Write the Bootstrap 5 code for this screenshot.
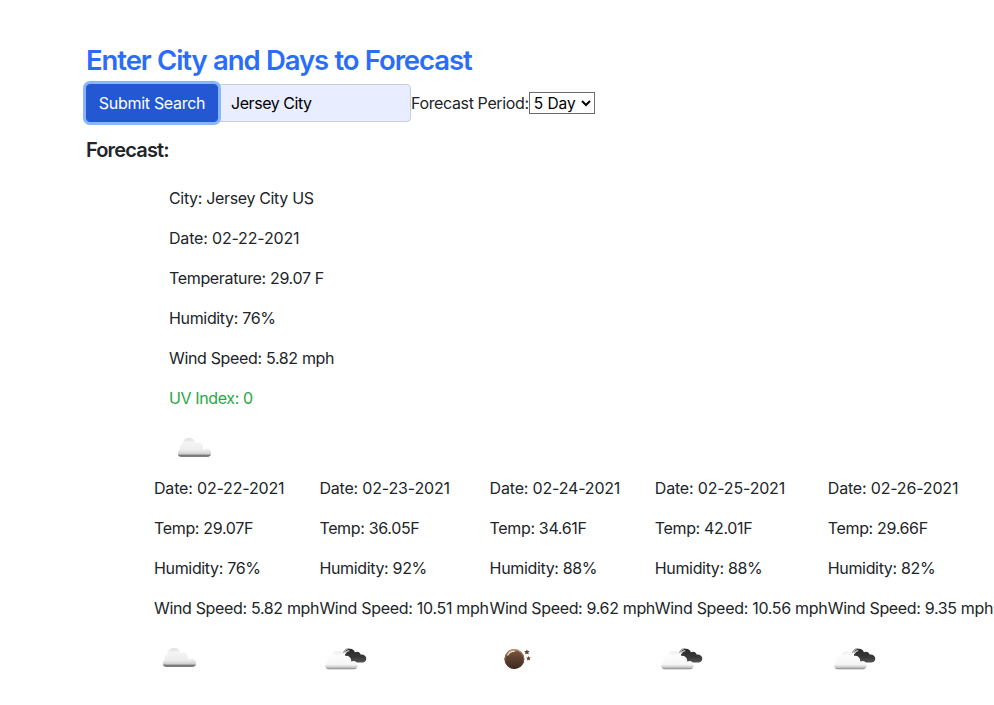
<!DOCTYPE html>
<html lang="en">
<head>
<meta charset="utf-8">
<title>Weather Forecast</title>
<link href="https://cdn.jsdelivr.net/npm/bootstrap@5.3.0/dist/css/bootstrap.min.css" rel="stylesheet">
<style>
body{font-family:Inter,sans-serif;letter-spacing:-.34px;color:#212529;overflow:hidden}
.page{padding:44.4px 0 0 86px;width:994px}
.page h3{font-size:27.5px;line-height:33.6px;font-weight:600;letter-spacing:-1.08px;word-spacing:.5px;color:#2a6df9;white-space:nowrap;margin-bottom:6px}
.page h5{font-size:20px;font-weight:600;letter-spacing:-.84px;margin:16px 0 24px}
.search-btn,.search-btn:hover{width:132px;height:38px;letter-spacing:-.3px;padding:6px 0;background:#2458d2;border-color:#2458d2;color:#fff;box-shadow:0 0 0 3px #86b7fe;z-index:1}
.city-input{width:193px;height:38px;background:#e8eeff;border-color:#c7ced8;color:#000;letter-spacing:-.45px;border-radius:0 4px 4px 0}
.search-btn{border-radius:4px}
.period-label{letter-spacing:-.37px}
.period{width:66px;height:22px;padding:0;border:1px solid #6b6b6b;border-radius:0;background:#fff;color:#000;font-size:15.5px;letter-spacing:0;line-height:normal}
.current{padding-left:83px}
.days{padding-left:68px}
.days>div{flex:none;white-space:nowrap}
.date{letter-spacing:-.18px}
.w1{width:165.4px}.w2{width:170.2px}.w3{width:165.2px}.w4{width:173px}.w5{width:166px}
.w2 .wind,.w4 .wind{letter-spacing:-.3px}
.uv{color:#28a745;letter-spacing:-.37px}
.wicon{width:50px;height:50px;display:block;overflow:visible}
</style>
</head>
<body>
<svg width="0" height="0" class="position-absolute" aria-hidden="true">
<defs>
<linearGradient id="gc" x1="0" y1="0" x2="0" y2="1"><stop offset="0" stop-color="#dedede"/><stop offset=".25" stop-color="#f4f4f4"/><stop offset=".65" stop-color="#ececec"/><stop offset=".85" stop-color="#cfcfcf"/><stop offset=".9" stop-color="#777"/><stop offset="1" stop-color="#808080"/></linearGradient>
<linearGradient id="gw" x1="0" y1="0" x2="0" y2="1"><stop offset="0" stop-color="#ececec"/><stop offset=".25" stop-color="#fcfcfc"/><stop offset=".72" stop-color="#f6f6f6"/><stop offset=".88" stop-color="#cacaca"/><stop offset="1" stop-color="#777"/></linearGradient>
<linearGradient id="gd" x1="0" y1="0" x2="0" y2="1"><stop offset="0" stop-color="#292929"/><stop offset=".6" stop-color="#383838"/><stop offset="1" stop-color="#555"/></linearGradient>
<linearGradient id="gm" x1="0" y1="0" x2="0" y2="1"><stop offset="0" stop-color="#805a43"/><stop offset=".45" stop-color="#5e4130"/><stop offset="1" stop-color="#3b281f"/></linearGradient>
<linearGradient id="gs" x1="0" y1="0" x2="0" y2="1"><stop offset="0" stop-color="#d9ae88"/><stop offset=".5" stop-color="#7d5840"/><stop offset="1" stop-color="#432c20"/></linearGradient>
<clipPath id="cc"><circle cx="12.700" cy="27" r="4"/><circle cx="14.300" cy="22" r="3.500"/><circle cx="20" cy="18.200" r="6.500"/><circle cx="29.200" cy="21.500" r="4.900"/><circle cx="37.900" cy="26.700" r="4.300"/><rect x="12.500" y="20" width="18" height="11"/><rect x="28" y="23.500" width="10" height="7.500"/></clipPath>
<clipPath id="cw"><circle cx="10.300" cy="29.300" r="4.200"/><circle cx="12.500" cy="24.500" r="4"/><circle cx="19" cy="21.700" r="6.500"/><circle cx="27.200" cy="24.800" r="5"/><circle cx="34.500" cy="29.200" r="4.300"/><rect x="10" y="24" width="20" height="9.500"/><rect x="26" y="26" width="8.500" height="7.500"/></clipPath>
<symbol id="cloud" viewBox="0 0 50 50"><rect x="8" y="11.700" width="35" height="19.300" fill="url(#gc)" clip-path="url(#cc)"/></symbol>
<symbol id="broken" viewBox="0 0 50 50"><path d="M26 18c0-3.300 2.500-5.200 5-5.200 2.400 0 4.300 1.400 4.900 3.400 2.400-1.400 5.300-.1 5.700 2.400 3-.5 5.700 1.400 5.700 4 0 2.400-1.800 4-4.200 4h-9.400c-2.700 0-4.500-1.500-4.500-3.700-2-.9-3.200-2.500-3.200-4.900z" fill="url(#gd)"/><path d="M24.500 17c.8-2.700 2.800-4.500 5.500-4.300" fill="none" stroke="#888" stroke-width="1.100"/><path d="M26.200 18c.7-2.100 2.100-3.400 4.200-3.200" fill="none" stroke="#ddd" stroke-width="1.100"/><rect x="6" y="15.200" width="33.500" height="18.300" fill="url(#gw)" clip-path="url(#cw)"/></symbol>
<symbol id="moon" viewBox="0 0 50 50"><circle cx="24.400" cy="23" r="10" fill="url(#gm)"/><circle cx="24.400" cy="23" r="9.300" fill="none" stroke="url(#gs)" stroke-width="1"/><path d="M17.700 19.200c1.400-2.700 3.800-4 6.900-4.100" fill="none" stroke="#ffe8cf" stroke-width="1.100" stroke-linecap="round"/><path d="M36.900 13.400l.8 1.700 2 .2-1.400 1.300.4 2-1.800-1-1.800 1 .4-2-1.400-1.300 2-.2z" fill="#67432f"/><path d="M38.500 19.900l.7 1.500 1.700.2-1.200 1.200.3 1.700-1.500-.8-1.500.8.3-1.700-1.200-1.200 1.700-.2z" fill="#67432f"/></symbol>
</defs></svg>
<main class="page">
<h3>Enter City and Days to Forecast</h3>
<form class="d-flex align-items-center" onsubmit="return false">
<button class="btn btn-primary search-btn position-relative" type="button">Submit Search</button>
<input class="form-control city-input" aria-label="City" value="Jersey City">
<label for="period" class="period-label">Forecast Period:</label>
<select id="period" class="period"><option>5 Day</option></select>
</form>
<h5>Forecast:</h5>
<section class="current">
<p>City: Jersey City US</p><p class="date">Date: 02-22-2021</p><p>Temperature: 29.07 F</p><p>Humidity: 76%</p><p>Wind Speed: 5.82 mph</p><p class="uv">UV Index: 0</p>
<svg class="wicon"><use href="#cloud"/></svg>
</section>
<section class="days d-flex">
<div class="w1"><p class="date">Date: 02-22-2021</p><p>Temp: 29.07F</p><p>Humidity: 76%</p><p class="wind">Wind Speed: 5.82 mph</p><svg class="wicon"><use href="#cloud"/></svg></div>
<div class="w2"><p class="date">Date: 02-23-2021</p><p>Temp: 36.05F</p><p>Humidity: 92%</p><p class="wind">Wind Speed: 10.51 mph</p><svg class="wicon"><use href="#broken"/></svg></div>
<div class="w3"><p class="date">Date: 02-24-2021</p><p>Temp: 34.61F</p><p>Humidity: 88%</p><p class="wind">Wind Speed: 9.62 mph</p><svg class="wicon"><use href="#moon"/></svg></div>
<div class="w4"><p class="date">Date: 02-25-2021</p><p>Temp: 42.01F</p><p>Humidity: 88%</p><p class="wind">Wind Speed: 10.56 mph</p><svg class="wicon"><use href="#broken"/></svg></div>
<div class="w5"><p class="date">Date: 02-26-2021</p><p>Temp: 29.66F</p><p>Humidity: 82%</p><p class="wind">Wind Speed: 9.35 mph</p><svg class="wicon"><use href="#broken"/></svg></div>
</section>
</main>
<script src="https://cdn.jsdelivr.net/npm/bootstrap@5.3.0/dist/js/bootstrap.bundle.min.js"></script>
</body>
</html>
